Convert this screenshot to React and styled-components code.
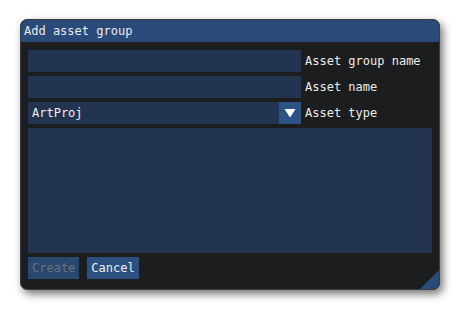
import React from 'react';
import styled, { createGlobalStyle } from 'styled-components';

const Global = createGlobalStyle`
  html, body {
    margin: 0;
    padding: 0;
    background: #ffffff;
  }
  * { box-sizing: border-box; }
`;

const Page = styled.div`
  width: 460px;
  height: 311px;
  padding: 19px 0 0 20px;
  font-family: "DejaVu Sans Mono", "Liberation Mono", monospace;
  font-size: 12px;
`;

const Window = styled.div`
  position: relative;
  width: 420px;
  height: 271px;
  border-radius: 7px;
  background: #1c1d1e;
  border: 1px solid #3a3c44;
  box-shadow: 3px 4px 8px rgba(0, 0, 0, 0.55);
  overflow: hidden;
  display: flex;
  flex-direction: column;
`;

const TitleBar = styled.div`
  height: 22px;
  background: #2a4a7a;
  color: #ececec;
  display: flex;
  align-items: center;
  padding-left: 3px;
`;

const Body = styled.div`
  flex: 1;
  display: flex;
  flex-direction: column;
  gap: 4px;
  padding: 8px 7px 0 7px;
`;

const Row = styled.div`
  display: flex;
  align-items: center;
  gap: 4px;
  height: 22px;
`;

const Field = styled.div`
  width: 273px;
  height: 22px;
  background: #233450;
  color: #f0f0f0;
  display: flex;
  align-items: center;
  padding-left: 4px;
`;

const Grow = styled.div`
  flex: 1;
`;

const ArrowBtn = styled.div`
  width: 22px;
  height: 22px;
  background: #2d5384;
  display: flex;
  align-items: center;
  justify-content: center;
`;

const Label = styled.span`
  color: #ececec;
  white-space: nowrap;
`;

const TextArea = styled.div`
  width: 404px;
  height: 125px;
  background: #233450;
`;

const Buttons = styled.div`
  display: flex;
  gap: 8px;
`;

const Button = styled.div`
  height: 22px;
  padding: 0 4px;
  display: flex;
  align-items: center;
  background: ${p => (p.$disabled ? '#29486f' : '#2b5080')};
  color: ${p => (p.$disabled ? '#6e7378' : '#f2f2f2')};
`;

const Grip = styled.svg`
  position: absolute;
  right: 0;
  bottom: 0;
`;

export default function App() {
  return (
    <>
      <Global />
      <Page>
        <Window>
          <TitleBar>Add asset group</TitleBar>
          <Body>
            <Row>
              <Field />
              <Label>Asset group name</Label>
            </Row>
            <Row>
              <Field />
              <Label>Asset name</Label>
            </Row>
            <Row>
              <Field>
                <Grow>ArtProj</Grow>
                <ArrowBtn>
                  <svg width="12" height="10" viewBox="0 0 12 10">
                    <polygon points="0.5,1 11.5,1 6,9.5" fill="#ffffff" />
                  </svg>
                </ArrowBtn>
              </Field>
              <Label>Asset type</Label>
            </Row>
            <TextArea />
            <Buttons>
              <Button $disabled>Create</Button>
              <Button>Cancel</Button>
            </Buttons>
          </Body>
          <Grip width="19" height="19" viewBox="0 0 19 19">
            <polygon points="0,19 19,0 19,19" fill="#2a4a78" />
          </Grip>
        </Window>
      </Page>
    </>
  );
}
